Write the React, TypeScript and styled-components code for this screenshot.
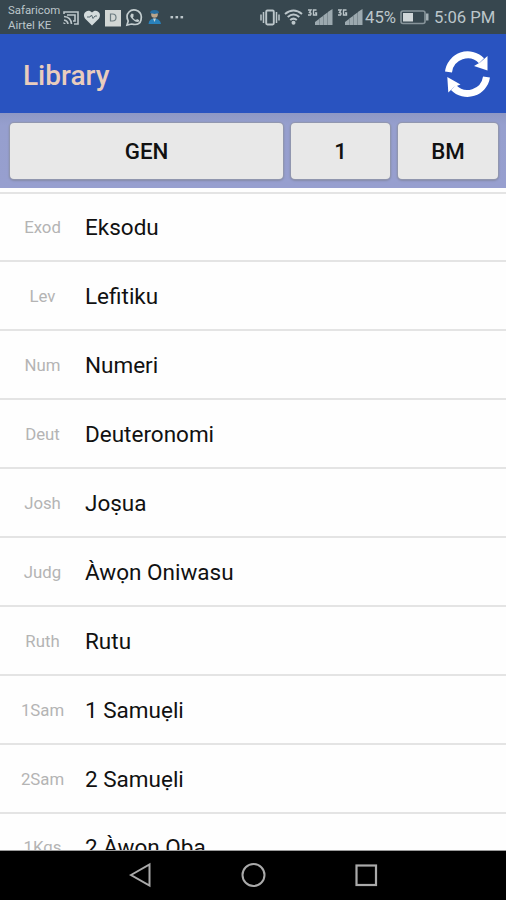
import React from "react";
import styled, { createGlobalStyle } from "styled-components";

const GlobalStyle = createGlobalStyle`
  * { box-sizing: border-box; }
  body { margin: 0; background: #fff; font-family: Roboto, "Noto Sans", sans-serif; }
`;

const Screen = styled.div`
  width: 506px;
  height: 900px;
  display: flex;
  flex-direction: column;
  overflow: hidden;
  background: #fefefe;
`;

const StatusBar = styled.header`
  height: 34px;
  flex: none;
  display: flex;
  justify-content: space-between;
  background: #37474f;
  color: #bcc6ca;
  padding: 0 11px 0 8px;
`;

const StatusGroup = styled.div`
  display: flex;
  align-items: center;
  svg { display: block; flex: none; }
`;

const Carriers = styled.div`
  width: 53px;
  margin-right: 1px;
  font-size: 11.4px;
  line-height: 15.5px;
  white-space: nowrap;
  padding-top: 2px;
`;

const StatusText = styled.span<{ $width: number }>`
  width: ${(p) => p.$width}px;
  font-size: 16.7px;
  line-height: 34px;
  white-space: nowrap;
  padding-top: 1px;
`;

const AppBar = styled.div`
  height: 79px;
  flex: none;
  display: flex;
  align-items: center;
  justify-content: space-between;
  padding: 0 14px 0 23px;
  background: #2953c0;
`;

const Title = styled.h1`
  margin: 4px 0 0;
  font-size: 28px;
  line-height: 32px;
  font-weight: 500;
  color: #e9cdbd;
`;

const RefreshButton = styled.button`
  width: 50px;
  height: 50px;
  padding: 0;
  border: 0;
  background: none;
  svg { display: block; }
`;

const Selector = styled.div`
  height: 75px;
  flex: none;
  display: grid;
  grid-template-columns: 273px 99px 100px;
  gap: 8px;
  padding: 10px 9px 9px 10px;
  background: linear-gradient(#8e98c4, #969fce 12px, #979fcf);
`;

const SelectorButton = styled.button`
  height: 56px;
  padding: 0;
  border: 0;
  border-radius: 4px;
  background: #e8e8e8;
  box-shadow: 0 0 1px 1px #9297ae, 0 1px 2px 1px #858baa;
  color: #111;
  font: 500 22.3px/28px Roboto, sans-serif;
`;

const BookList = styled.main`
  flex: 1;
  min-height: 0;
  overflow: hidden;
  border-bottom: 1px solid #9b9b9b;
  padding-top: 3.5px;
`;

const BookRow = styled.div`
  height: 68.9px;
  display: grid;
  grid-template-columns: 85px 1fr;
  align-items: center;
  border-top: 2px solid #e4e4e4;
`;

const Abbreviation = styled.span`
  text-align: center;
  font-size: 16.8px;
  line-height: 24px;
  padding-top: 1px;
  color: #b4b4b4;
`;

const BookName = styled.span`
  font-size: 22.5px;
  line-height: 30px;
  padding-top: 1px;
  color: #111;
`;

const NavBar = styled.nav`
  height: 49px;
  flex: none;
  display: flex;
  justify-content: center;
  gap: 86px;
  padding-top: 10px;
  background: #000;
  svg { display: block; }
`;

const books = [
  ["Exod", "Eksodu"],
  ["Lev", "Lefitiku"],
  ["Num", "Numeri"],
  ["Deut", "Deuteronomi"],
  ["Josh", "Joṣua"],
  ["Judg", "Àwọn Oniwasu"],
  ["Ruth", "Rutu"],
  ["1Sam", "1 Samuẹli"],
  ["2Sam", "2 Samuẹli"],
  ["1Kgs", "2 Àwọn Ọba"],
];

const NotificationIcons = () => (
  <svg width="122" height="34" viewBox="62 0 122 34">
    <g fill="none" stroke="#bcc6ca" strokeWidth="1.6">
      <path d="M64 14V12H78V24H74M64 16.5Q71 17 71.5 24M64 20Q67.5 20.5 68 24M67 15H75V21H73" />
    </g>
    <path d="M63.5 22L66 24H63.5Z" fill="#bcc6ca" />
    <path d="M92 25.500L85 18.500C81.5 13 88 8 92 12.500C96 8 102.500 13 99 18.500Z" fill="#d3dbdc" />
    <path d="M87 17H90L91.500 15L93 18.500L95 16H97" fill="none" stroke="#566870" strokeWidth="1" />
    <rect x="105" y="10" width="16" height="16.500" fill="#d2d7d5" />
    <path d="M110.500 14V21H112.500Q116 21 116 17.500T112.500 14Z" fill="none" stroke="#6c7c81" strokeWidth="1.2" />
    <path d="M127 25L128.200 21Q125.500 15.500 129 12T138 11Q142.500 14 141 20T131.500 24Z" fill="none" stroke="#c4ced0" strokeWidth="1.7" />
    <path d="M131.500 13.500L133.500 14V16.500L132.800 17.500Q134 19.500 136 20L137 19L139 20V21.500Q136.500 23 133 19.800T130.500 15Z" fill="#c4ced0" />
    <circle cx="154.500" cy="14.500" r="3.300" fill="#b9a58c" />
    <path d="M150 13Q150 10 154.500 10T159 13L154.500 14Z" fill="#276da0" />
    <path d="M148.500 24Q149 18.500 154.500 18.500T161 24Z" fill="#2981bb" />
    <path d="M153 18.500H156L154.500 22Z" fill="#c9d2d3" />
    <g fill="#bcc6ca">
      <rect x="170.500" y="16" width="2.600" height="2.400" />
      <rect x="175.500" y="16" width="2.600" height="2.400" />
      <rect x="180.500" y="16" width="2.600" height="2.400" />
    </g>
  </svg>
);

const SignalIcons = () => (
  <svg width="106" height="34" viewBox="259 0 106 34">
    <g fill="none" stroke="#bcc6ca">
      <rect x="266.200" y="10.500" width="7.600" height="14" rx="1.200" strokeWidth="1.900" />
      <path d="M263.500 12V23M276.500 12V23M261 14.500V20.500M279 14.500V20.500" strokeWidth="1.500" />
      <path d="M285 14Q293.500 7 302 14M287.700 17Q293.500 12 299.300 17M290.200 20Q293.500 17.200 296.800 20" strokeWidth="2" />
    </g>
    <circle cx="293.500" cy="22.800" r="2" fill="#bcc6ca" />
    <g fill="#9ca9af">
      <path d="M315 25V22L319 19V25ZM319.300 25V18.500L323 16V25ZM323.300 25V15.500L327.500 12.500V25ZM327.800 25V12L332.500 9V25Z" />
      <path d="M345 25V22L349 19V25ZM349.300 25V18.500L353 16V25ZM353.300 25V15.500L357.500 12.500V25ZM357.800 25V12L362.500 9V25Z" />
    </g>
    <g fill="none" stroke="#bcc6ca" strokeWidth="1.400">
      <path d="M308 10H311L309.500 12.500Q312 13 310.500 15H308M316.500 10H313.500V15H316.500V13H315" />
      <path d="M338 10H341L339.500 12.500Q342 13 340.500 15H338M346.500 10H343.500V15H346.500V13H345" />
    </g>
  </svg>
);

const BatteryIcon = () => (
  <svg width="37" height="34" viewBox="397 0 37 34">
    <rect x="401" y="11" width="24" height="12.500" rx="2" fill="none" stroke="#87949a" strokeWidth="1.600" />
    <rect x="403" y="13" width="10" height="8.500" fill="#d0d6d8" />
    <path d="M426 13.500H428.500V20.500H426" fill="#a3afb4" />
  </svg>
);

const RefreshIcon = () => (
  <svg width="50" height="50" viewBox="442 48.500 50 50">
    <g fill="none" stroke="#fff" strokeWidth="7">
      <path d="M448.500 71.500A19.300 19.300 0 0 1 481.500 60.200" />
      <path d="M486.500 76.500A19.300 19.300 0 0 1 453.500 87" />
    </g>
    <path d="M487.500 55.500V70L474 65.500L480 62Z" fill="#fff" />
    <path d="M447.300 76.500L460.500 84L454 86.500L448.300 92Z" fill="#fff" />
  </svg>
);

export default function App() {
  return (
    <Screen>
      <GlobalStyle />
      <StatusBar>
        <StatusGroup>
          <Carriers>Safaricom<br />Airtel KE</Carriers>
          <NotificationIcons />
        </StatusGroup>
        <StatusGroup>
          <SignalIcons />
          <StatusText $width={32}>45%</StatusText>
          <BatteryIcon />
          <StatusText $width={61}>5:06 PM</StatusText>
        </StatusGroup>
      </StatusBar>
      <AppBar>
        <Title>Library</Title>
        <RefreshButton aria-label="Refresh"><RefreshIcon /></RefreshButton>
      </AppBar>
      <Selector>
        <SelectorButton>GEN</SelectorButton>
        <SelectorButton>1</SelectorButton>
        <SelectorButton>BM</SelectorButton>
      </Selector>
      <BookList>
        {books.map(([abbreviation, name]) => (
          <BookRow key={abbreviation}>
            <Abbreviation>{abbreviation}</Abbreviation>
            <BookName>{name}</BookName>
          </BookRow>
        ))}
      </BookList>
      <NavBar>
        <svg width="27" height="28" viewBox="128 861 27 28" fill="none" stroke="#aaa" strokeWidth="2">
          <path d="M132 875L150.500 864.500V885.500Z" />
        </svg>
        <svg width="27" height="28" viewBox="240 861 27 28" fill="none" stroke="#aaa" strokeWidth="2">
          <circle cx="253.500" cy="875" r="11" />
        </svg>
        <svg width="27" height="28" viewBox="353 861 27 28" fill="none" stroke="#aaa" strokeWidth="2.200">
          <rect x="356.500" y="865.500" width="19.500" height="19.500" />
        </svg>
      </NavBar>
    </Screen>
  );
}
